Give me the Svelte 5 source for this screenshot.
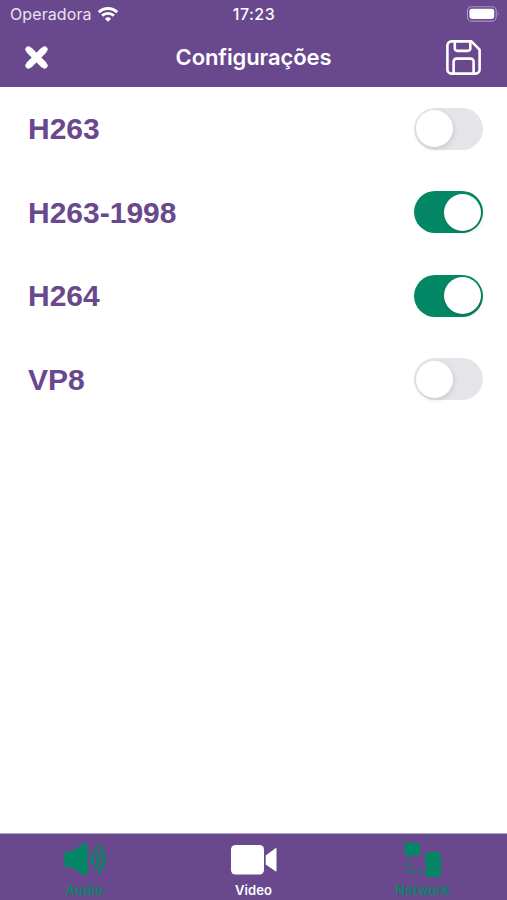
<script>
  let codecs = $state([
    { name: 'H263', on: false },
    { name: 'H263-1998', on: true },
    { name: 'H264', on: true },
    { name: 'VP8', on: false },
  ]);

  let tab = $state('video');
</script>

<div class="screen">
  <header>
    <div class="status">
      <div class="carrier">
        <span>Operadora</span>
        <svg width="20" height="15" viewBox="0 0 20 15" fill="none" stroke="#fff" stroke-width="2.9">
          <path d="M0.8 5.3a13 13 0 0 1 18.400 0" />
          <path d="M4.1 8.8a8.4 8.4 0 0 1 11.8 0" />
          <path d="M10 14.8 6.9 11.7a4.6 4.6 0 0 1 6.2 0z" fill="#fff" stroke="none" />
        </svg>
      </div>
      <span class="time">17:23</span>
      <svg class="battery" width="34" height="16" viewBox="0 0 34 16">
        <rect x="1.4" y="0.7" width="28.8" height="14.4" rx="4.2" fill="none" stroke="#a996c3" stroke-width="1.1" />
        <rect x="3.4" y="2.8" width="24.8" height="10.2" rx="2.4" fill="#fff" />
        <path d="M31.8 5.7q1.8 2.2 0 4.6z" fill="#a996c3" />
      </svg>
    </div>
    <nav>
      <button aria-label="Fechar">
        <svg width="24" height="24" viewBox="0 0 24 24" fill="none" stroke="#fff">
          <path d="M4.4 3.4 20.6 19.6M20.6 3.4 4.4 19.6" stroke-width="6" stroke-linecap="round" />
          <path d="M4.9 3.9 20.1 19.100M20.1 3.900 4.900 19.100" stroke-width="7" />
        </svg>
      </button>
      <h1>Configurações</h1>
      <button class="save" aria-label="Salvar">
        <svg width="36" height="36" viewBox="0 0 36 36" fill="none" stroke="#fff" stroke-width="2.6" stroke-linejoin="round">
          <path d="M5.4 1.4H25.4L33.6 9.6V29.6a4 4 0 0 1-4 4H5.4a4 4 0 0 1-4-4V5.4a4 4 0 0 1 4-4z" />
          <path d="M8.800 1.4V8.4a2.500 2.500 0 0 0 2.500 2.500H21.800a2.500 2.500 0 0 0 2.500-2.500V1.4" />
          <path d="M7.600 33.600V21.600a3 3 0 0 1 3-3H24.600a3 3 0 0 1 3 3V33.600" />
        </svg>
      </button>
    </nav>
  </header>

  <main>
    {#each codecs as codec}
      <div class="row">
        <span class="name">{codec.name}</span>
        <button
          class="switch"
          class:on={codec.on}
          role="switch"
          aria-checked={codec.on}
          aria-label={codec.name}
          onclick={() => (codec.on = !codec.on)}
        >
          <span class="knob"></span>
        </button>
      </div>
    {/each}
  </main>

  <footer>
    <button class="tab" class:active={tab === 'audio'} onclick={() => (tab = 'audio')}>
      <svg width="50" height="36" viewBox="0 0 50 36" fill="currentColor">
        <path d="M6 9.800h6L22.500 2.300q5-2.400 5 1.400V31q0 3.600-5 1.400L12 24.900H6q-2 0-2-2V20.500q1.400-3.300 0-6.600V11.800q0-2 2-2z" />
        <g fill="none" stroke="currentColor" stroke-width="2.8" stroke-linecap="round">
          <path d="M31 12.500q3.500 5 0 9.600" />
          <path d="M35 8.300q7 9 0 18.200" />
          <path d="M39 3.500q10 13.500 0 27" />
        </g>
      </svg>
      <span>Audio</span>
    </button>
    <button class="tab" class:active={tab === 'video'} onclick={() => (tab = 'video')}>
      <svg width="50" height="36" viewBox="0 0 50 36" fill="currentColor">
        <rect x="2" y="3" width="33" height="29.5" rx="4.5" />
        <path d="M36.7 13.500 46.5 6.2q1-.5 1 .5V28.800q0 1-1 .5L36.7 22.500z" />
      </svg>
      <span>Video</span>
    </button>
    <button class="tab" class:active={tab === 'network'} onclick={() => (tab = 'network')}>
      <svg width="50" height="36" viewBox="0 0 50 36" fill="currentColor">
        <rect x="6.5" y="0.8" width="15.5" height="12.8" rx="3.5" />
        <rect x="27.5" y="10" width="15.5" height="25" rx="3.5" />
        <circle cx="11" cy="17.5" r="1.7" />
        <circle cx="11" cy="23.5" r="1.7" />
        <circle cx="11" cy="29.8" r="1.7" />
        <circle cx="17" cy="30" r="1.7" />
        <circle cx="23" cy="30" r="1.7" />
        <circle cx="35.5" cy="30" r="1.3" fill="#3d6774" />
      </svg>
      <span>Network</span>
    </button>
  </footer>
</div>

<style>
  :global(body) { margin: 0; background: #fff; }
  .screen {
    display: flex; flex-direction: column; height: 100vh; background: #fff;
    font-family: Inter, "Liberation Sans", sans-serif;
  }
  button { background: none; border: none; padding: 0; font: inherit; cursor: pointer; }
  svg { display: block; }

  header { height: 87px; background: #69488e; color: #fff; }
  .status { display: grid; grid-template-columns: 1fr auto 1fr; align-items: center; height: 28px; padding: 0 7px 0 8px; font-size: 16px; }
  .carrier { display: flex; align-items: center; gap: 6px; color: #e9e2f1; letter-spacing: 0.1px; padding: 0 0 0 2px; }
  .time { font-weight: 500; letter-spacing: 0.5px; }
  .battery { justify-self: end; }
  nav { display: grid; grid-template-columns: 1fr auto 1fr; align-items: center; height: 59px; padding: 0 25px 0 24px; }
  nav button { justify-self: start; }
  nav .save { justify-self: end; }
  h1 { margin: 0 0 1px; padding-left: 1px; font-size: 22px; font-weight: 600; letter-spacing: -0.1px; }

  main { flex: 1; }
  .row { display: flex; align-items: center; justify-content: space-between; height: 83.5px; padding: 0 24px 0 28px; }
  .name { padding-top: 1px; font-family: "Liberation Sans", Arial, sans-serif; font-size: 30px; font-weight: 700; color: #69488e; }
  .switch { display: flex; align-items: center; box-sizing: border-box; width: 69px; height: 42px; padding: 0 2px; border-radius: 21px; background: #e5e5e9; }
  .switch.on { justify-content: flex-end; background: #048764; }
  .knob { width: 37px; height: 37px; border-radius: 50%; background: #fff; box-shadow: 1px 2px 5px rgba(0, 0, 0, 0.12); }

  footer { display: grid; grid-template-columns: repeat(3, 1fr); box-sizing: border-box; height: 67px; border-top: 1px solid #b5a5c8; background: #69488e; }
  .tab { display: flex; flex-direction: column; align-items: center; padding-top: 8px; color: #048764; font-size: 13px; font-weight: 600; line-height: 16px; letter-spacing: 0.1px; }
  .tab span { margin-top: 4px; }
  .tab.active { color: #fff; }
</style>
